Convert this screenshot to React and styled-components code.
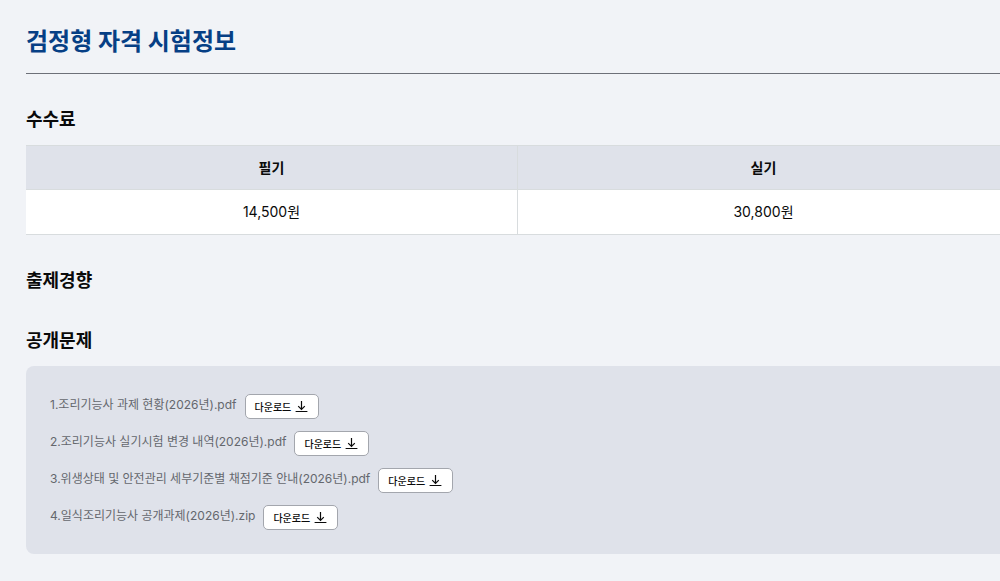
import React from 'react';
import styled, { createGlobalStyle } from 'styled-components';

const colors = {
  page: '#f1f3f7',
  panel: '#dfe2ea',
  line: '#d8dcde',
  rule: '#6d7078',
  primary: '#063f85',
  black: '#0a0a0a',
  muted: '#64676d',
  white: '#ffffff',
};

const GlobalStyle = createGlobalStyle`
  body {
    padding: 0;
    margin: 0;
    overflow-x: hidden;
    font-family: Inter, 'Noto Sans CJK KR', sans-serif;
    color: ${colors.black};
    background: ${colors.page};
  }

  *, *::before, *::after {
    box-sizing: border-box;
  }
`;

const Page = styled.main`
  margin-right: -9px;
  padding: 24px 0 27px 26px;
`;

const Title = styled.h1`
  margin: 0 0 32px;
  padding-bottom: 13px;
  border-bottom: 1px solid ${colors.rule};
  font-size: 24px;
  line-height: 36px;
  font-weight: 700;
  color: ${colors.primary};
`;

const Section = styled.section`
  margin-bottom: 32px;

  &:last-child {
    margin-bottom: 0;
  }
`;

const Heading = styled.h2`
  margin: 0;
  font-size: 18px;
  line-height: 28px;
  font-weight: 700;
`;

const FeeTable = styled.table`
  width: 100%;
  margin-top: 11px;
  border-collapse: collapse;
  table-layout: fixed;
  font-size: 14px;
  line-height: 20px;
  text-align: center;
`;

const Cell = styled.td`
  height: ${({ as }) => (as === 'th' ? '44px' : '45px')};
  padding: 0;
  border: 1px solid ${colors.line};
  border-width: 1px 0;
  background: ${({ as }) => (as === 'th' ? colors.panel : colors.white)};
  font-weight: ${({ as }) => (as === 'th' ? 700 : 400)};

  & + & {
    border-left-width: 1px;
  }
`;

const FileList = styled.ul`
  display: flex;
  flex-direction: column;
  gap: 12px;
  margin: 11px 0 0;
  padding: 28px 24px 24px;
  border-radius: 8px;
  background: ${colors.panel};
  list-style: none;
`;

const FileRow = styled.li`
  display: flex;
  align-items: flex-start;
  gap: 8px;
`;

const FileName = styled.span`
  font-size: 12px;
  line-height: 22px;
  color: ${colors.muted};
`;

const DownloadButton = styled.button`
  display: flex;
  justify-content: center;
  align-items: center;
  gap: 4px;
  height: 25px;
  padding: 0 10px 0 9px;
  border: 1px solid #a3a6ad;
  border-radius: 5px;
  background: ${colors.white};
  color: ${colors.black};
  font-family: inherit;
  font-size: 10px;
  font-weight: 500;
  line-height: 16px;
  cursor: pointer;
`;

const DownloadIcon = () => (
  <svg width="13" height="13" viewBox="0 0 13 13" fill="none" stroke="currentColor" strokeWidth="1.2" aria-hidden="true">
    <path d="M6.5 1v8.4M3.2 6.2l3.3 3.3 3.3-3.3M.6 11.5h11.8" />
  </svg>
);

const files = [
  '1.조리기능사 과제 현황(2026년).pdf',
  '2.조리기능사 실기시험 변경 내역(2026년).pdf',
  '3.위생상태 및 안전관리 세부기준별 채점기준 안내(2026년).pdf',
  '4.일식조리기능사 공개과제(2026년).zip',
];

const App = () => (
  <>
    <GlobalStyle />
    <Page lang="ko">
      <Title>검정형 자격 시험정보</Title>
      <Section>
        <Heading>수수료</Heading>
        <FeeTable>
          <thead>
            <tr>
              <Cell as="th" scope="col">필기</Cell>
              <Cell as="th" scope="col">실기</Cell>
            </tr>
          </thead>
          <tbody>
            <tr>
              <Cell>14,500원</Cell>
              <Cell>30,800원</Cell>
            </tr>
          </tbody>
        </FeeTable>
      </Section>
      <Section>
        <Heading>출제경향</Heading>
      </Section>
      <Section>
        <Heading>공개문제</Heading>
        <FileList>
          {files.map((name) => (
            <FileRow key={name}>
              <FileName>{name}</FileName>
              <DownloadButton type="button">
                다운로드
                <DownloadIcon />
              </DownloadButton>
            </FileRow>
          ))}
        </FileList>
      </Section>
    </Page>
  </>
);

export default App;
